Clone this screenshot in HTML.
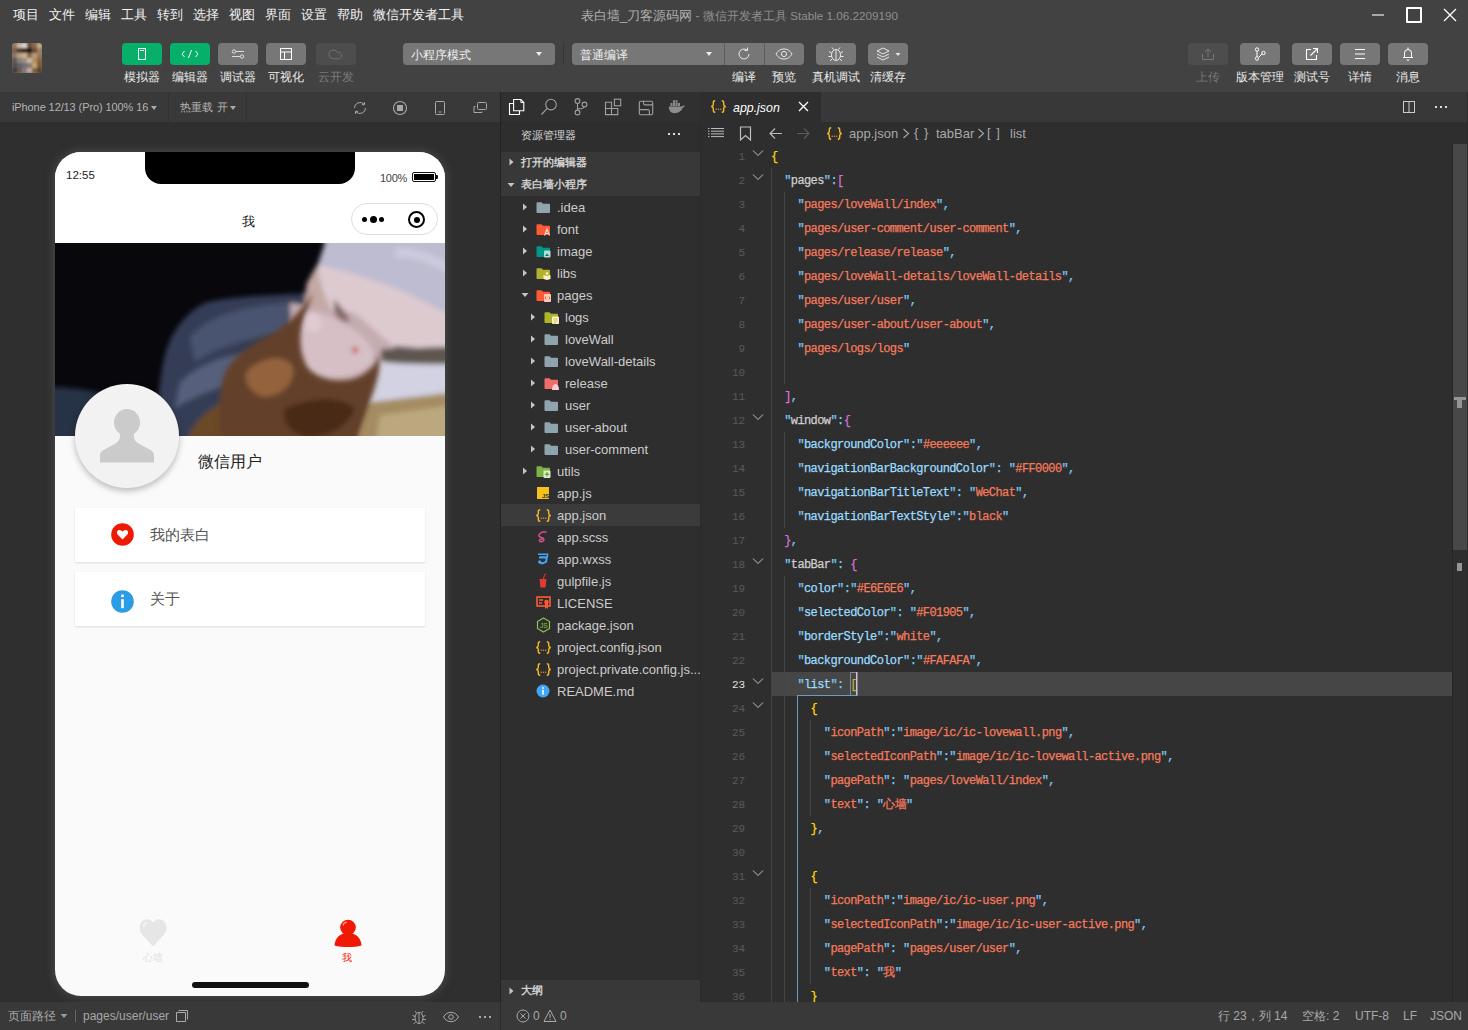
<!DOCTYPE html>
<html><head><meta charset="utf-8">
<style>
*{margin:0;padding:0;box-sizing:border-box}
html,body{width:1468px;height:1030px;overflow:hidden;background:#2e2e2e;font-family:"Liberation Sans",sans-serif;}
.a{position:absolute}
#top{left:0;top:0;width:1468px;height:92px;background:#424242}
#simbar{left:0;top:92px;width:500px;height:30px;background:#393939}
#sim{left:0;top:122px;width:500px;height:880px;background:#2f2f2f}
#vdiv{left:500px;top:92px;width:1px;height:910px;background:#222}
#exp{left:501px;top:92px;width:199px;height:910px;background:#2e2e2e}
#edtabs{left:701px;top:92px;width:767px;height:30px;background:#383838}
#editor{left:701px;top:122px;width:767px;height:880px;background:#2e2e2e}
#status{left:0;top:1002px;width:1468px;height:28px;background:#393939}
.menu{top:7px;font-size:13px;color:#f2f2f2;white-space:nowrap;line-height:16px}
.tb{top:43px;width:40px;height:22px;border-radius:4px;background:#777}
.tb svg{display:block}
.tb.g{background:#07b06a}
.tb.d{background:#4d4d4d}
.tl{top:69px;font-size:12px;color:#eaeaea;text-align:center;white-space:nowrap;line-height:16px}
.dd{top:43px;height:22px;border-radius:4px;background:#777;font-size:12px;color:#f0f0f0;padding-left:8px;line-height:24px;white-space:nowrap}
.car{position:absolute;left:133px;top:9px;width:0;height:0;border-left:3.5px solid transparent;border-right:3.5px solid transparent;border-top:4px solid #eee}
.car2{width:0;height:0;border-left:3.5px solid transparent;border-right:3.5px solid transparent;border-top:4px solid #aaa}
.card{width:350px;height:54px;background:#fff;box-shadow:0 1px 2px rgba(0,0,0,.12)}
.et{font-size:13px;color:#cccccc;white-space:nowrap;line-height:18px}
.sh{font-size:11px;font-weight:bold;color:#cfcfcf;white-space:nowrap;line-height:16px}
.ln{left:715px;width:30px;text-align:right;font-family:"Liberation Mono",monospace;font-size:11px;color:#5a5a5a;line-height:24px;letter-spacing:-0.1px}
.ln.cur{color:#e0e0e0}
.cl{left:771px;font-family:"Liberation Mono",monospace;font-size:12px;letter-spacing:-0.6px;line-height:24px;white-space:pre;color:#d4d4d4;-webkit-text-stroke:0.25px currentColor}
.q{color:#7ccaf8}
.k0{color:#d0d0d0}
.k1{color:#9cdcfe}
.s{color:#f47a5c}
.b1{color:#ffd700}
.b2{color:#da70d6}
.b3{color:#179fff}
.bx{outline:1px solid #888;outline-offset:-1px}
.ig{width:1px;background:#444}
.bc{font-size:13px;color:#a9a9a9;white-space:nowrap;line-height:16px}
.st{top:1008px;font-size:12px;color:#a8a8a8;white-space:nowrap;line-height:16px}
</style></head><body>
<!-- TOP -->
<div id="top" class="a"></div>
<div class="a menu" style="left:13px">项目</div>
<div class="a menu" style="left:49px">文件</div>
<div class="a menu" style="left:85px">编辑</div>
<div class="a menu" style="left:121px">工具</div>
<div class="a menu" style="left:157px">转到</div>
<div class="a menu" style="left:193px">选择</div>
<div class="a menu" style="left:229px">视图</div>
<div class="a menu" style="left:265px">界面</div>
<div class="a menu" style="left:301px">设置</div>
<div class="a menu" style="left:337px">帮助</div>
<div class="a menu" style="left:373px">微信开发者工具</div>
<div class="a" style="left:581px;top:7px;font-size:13px;color:#b0b0b0;white-space:nowrap">表白墙_刀客源码网<span style="color:#8e8e8e;font-size:12px"> - 微信开发者工具 <span style="font-size:11.7px">Stable 1.06.2209190</span></span></div>
<div class="a" style="left:1372px;top:14px;width:12px;height:2px;background:#a8a8a8"></div>
<div class="a" style="left:1406px;top:7px;width:16px;height:16px;border:2px solid #fff;border-radius:1px"></div>
<svg class="a" style="left:1443px;top:8px" width="14" height="14" viewBox="0 0 14 14"><path d="M1 1L13 13M13 1L1 13" stroke="#fff" stroke-width="1.3"/></svg>
<!-- avatar -->
<div class="a" style="left:12px;top:43px;width:30px;height:30px;border-radius:3px;overflow:hidden"><svg width="30" height="30" viewBox="0 0 30 30"><defs><filter id="avb" x="-20%" y="-20%" width="140%" height="140%"><feGaussianBlur stdDeviation="1.3"/></filter></defs><g filter="url(#avb)"><rect x="-3" y="-3" width="36" height="36" fill="#806a58"/><rect x="0" y="0" width="5" height="5" fill="#9a7860"/><rect x="5" y="0" width="5" height="5" fill="#c8b8a8"/><rect x="10" y="0" width="5" height="5" fill="#d8d0c8"/><rect x="15" y="0" width="5" height="5" fill="#6a5040"/><rect x="20" y="0" width="5" height="5" fill="#8a6850"/><rect x="25" y="0" width="5" height="5" fill="#c0a888"/><rect x="0" y="5" width="5" height="5" fill="#806048"/><rect x="5" y="5" width="5" height="5" fill="#504038"/><rect x="10" y="5" width="5" height="5" fill="#40302a"/><rect x="15" y="5" width="5" height="5" fill="#2a1e18"/><rect x="20" y="5" width="5" height="5" fill="#6a5040"/><rect x="25" y="5" width="5" height="5" fill="#a08060"/><rect x="0" y="10" width="5" height="5" fill="#8a7868"/><rect x="5" y="10" width="5" height="5" fill="#b8a080"/><rect x="10" y="10" width="5" height="5" fill="#c8b090"/><rect x="15" y="10" width="5" height="5" fill="#8a6a50"/><rect x="20" y="10" width="5" height="5" fill="#b89870"/><rect x="25" y="10" width="5" height="5" fill="#9a7858"/><rect x="0" y="15" width="5" height="5" fill="#605858"/><rect x="5" y="15" width="5" height="5" fill="#8a8078"/><rect x="10" y="15" width="5" height="5" fill="#a09080"/><rect x="15" y="15" width="5" height="5" fill="#c8b8a8"/><rect x="20" y="15" width="5" height="5" fill="#b09060"/><rect x="25" y="15" width="5" height="5" fill="#8a6040"/><rect x="0" y="20" width="5" height="5" fill="#505050"/><rect x="5" y="20" width="5" height="5" fill="#606068"/><rect x="10" y="20" width="5" height="5" fill="#707078"/><rect x="15" y="20" width="5" height="5" fill="#8a7a70"/><rect x="20" y="20" width="5" height="5" fill="#c0a070"/><rect x="25" y="20" width="5" height="5" fill="#7a5838"/><rect x="0" y="25" width="5" height="5" fill="#403a38"/><rect x="5" y="25" width="5" height="5" fill="#6a5a50"/><rect x="10" y="25" width="5" height="5" fill="#8a7a78"/><rect x="15" y="25" width="5" height="5" fill="#c0a8a0"/><rect x="20" y="25" width="5" height="5" fill="#806040"/><rect x="25" y="25" width="5" height="5" fill="#5a4028"/></g></svg></div>
<!-- toolbar buttons -->
<div class="a tb g" style="left:122px"><svg width="40" height="22"><rect x="16.5" y="5.5" width="7" height="11" fill="none" stroke="#fff" stroke-width="1"/><line x1="18" y1="7.5" x2="22" y2="7.5" stroke="#fff"/></svg></div>
<div class="a tb g" style="left:170px"><svg width="40" height="22"><path d="M14.5 8L12 11l2.5 3M25.5 8L28 11l-2.5 3M21.5 7L18.5 15" fill="none" stroke="#fff" stroke-width="1"/></svg></div>
<div class="a tb" style="left:218px"><svg width="40" height="22"><line x1="14" y1="8.5" x2="26" y2="8.5" stroke="#ddd"/><line x1="14" y1="13.5" x2="26" y2="13.5" stroke="#ddd"/><circle cx="16" cy="8.5" r="1.7" fill="#777" stroke="#ddd"/><circle cx="24" cy="13.5" r="1.7" fill="#777" stroke="#ddd"/></svg></div>
<div class="a tb" style="left:266px"><svg width="40" height="22"><rect x="14.5" y="5.5" width="11" height="11" fill="none" stroke="#fff"/><line x1="14.5" y1="9" x2="25.5" y2="9" stroke="#fff"/><line x1="18.5" y1="9" x2="18.5" y2="16.5" stroke="#fff"/></svg></div>
<div class="a tb d" style="left:316px"><svg width="40" height="22"><path d="M17.3 15.8a4.4 4.4 0 1 1 4-6.4 M21.3 9.4a3.2 3.2 0 1 1 1.8 6.4h-5.8" fill="none" stroke="#707070" stroke-width="1"/></svg></div>
<div class="a tl" style="left:114px;width:56px">模拟器</div>
<div class="a tl" style="left:162px;width:56px">编辑器</div>
<div class="a tl" style="left:210px;width:56px">调试器</div>
<div class="a tl" style="left:258px;width:56px">可视化</div>
<div class="a tl" style="left:308px;width:56px;color:#7a7a7a">云开发</div>
<!-- dropdowns -->
<div class="a dd" style="left:403px;width:152px">小程序模式<span class="car"></span></div>
<div class="a" style="left:563px;top:43px;width:1px;height:22px;background:#363636"></div>
<div class="a dd" style="left:572px;width:232px;padding-left:8px">普通编译<span class="car" style="left:134px"></span></div>
<div class="a" style="left:724px;top:43px;width:1px;height:22px;background:#5e5e5e"></div>
<div class="a" style="left:764px;top:43px;width:1px;height:22px;background:#5e5e5e"></div>
<svg class="a" style="left:734px;top:44px" width="20" height="20" viewBox="0 0 20 20"><path d="M15 10a5 5 0 1 1-2-4" fill="none" stroke="#e8e8e8" stroke-width="1"/><path d="M13.5 3.5v3h-3" fill="none" stroke="#e8e8e8" stroke-width="1"/></svg>
<svg class="a" style="left:774px;top:44px" width="20" height="20" viewBox="0 0 20 20"><path d="M2 10c2.5-4 5-5 8-5s5.5 1 8 5c-2.5 4-5 5-8 5s-5.5-1-8-5z" fill="none" stroke="#e8e8e8" stroke-width="1"/><circle cx="10" cy="10" r="2.6" fill="none" stroke="#e8e8e8" stroke-width="1"/></svg>
<div class="a tb" style="left:816px"><svg width="40" height="22"><ellipse cx="20" cy="12" rx="4.5" ry="5.5" fill="none" stroke="#e8e8e8"/><line x1="20" y1="7" x2="20" y2="17" stroke="#e8e8e8"/><path d="M17.5 6.5l-1.5-2M22.5 6.5l1.5-2M15.5 10l-2.5-1.5M24.5 10l2.5-1.5M15.5 13.5h-3M24.5 13.5h3M16 16l-2 2M24 16l2 2" stroke="#e8e8e8" fill="none"/></svg></div>
<div class="a tb" style="left:868px"><svg width="40" height="22"><path d="M9 8l6-3 6 3-6 3z M9 11l6 3 6-3 M9 14l6 3 6-3" fill="none" stroke="#e8e8e8"/><path d="M27.5 10h5l-2.5 3z" fill="#e8e8e8"/></svg></div>
<div class="a tl" style="left:716px;width:56px">编译</div>
<div class="a tl" style="left:756px;width:56px">预览</div>
<div class="a tl" style="left:806px;width:60px">真机调试</div>
<div class="a tl" style="left:860px;width:56px">清缓存</div>
<!-- right buttons -->
<div class="a tb d" style="left:1188px"><svg width="40" height="22"><path d="M14.5 11v5.5h11V11M20 14V6M17 9l3-3 3 3" fill="none" stroke="#777"/></svg></div>
<div class="a tb" style="left:1240px"><svg width="40" height="22"><circle cx="17" cy="6.5" r="1.7" fill="none" stroke="#fff"/><circle cx="17" cy="15.5" r="1.7" fill="none" stroke="#fff"/><circle cx="23.5" cy="10" r="1.7" fill="none" stroke="#fff"/><path d="M17 8.2v5.6M22 11l-3.5 3.5" stroke="#fff" fill="none"/></svg></div>
<div class="a tb" style="left:1292px"><svg width="40" height="22"><path d="M19 6.5h-4.5v10h10V12M18.5 12.5L25 6M21 5.5h4.5V10" fill="none" stroke="#fff" stroke-width="1.1"/></svg></div>
<div class="a tb" style="left:1340px"><svg width="40" height="22"><path d="M15 6.5h10M15 11h10M15 15.5h10" stroke="#fff"/></svg></div>
<div class="a tb" style="left:1388px"><svg width="40" height="22"><path d="M16.5 14.5v-4.5a3.5 3.5 0 0 1 7 0v4.5zM15 14.5h10M20 4.5v2M19 16.5a1 1 0 0 0 2 0" fill="none" stroke="#fff"/></svg></div>
<div class="a tl" style="left:1180px;width:56px;color:#777">上传</div>
<div class="a tl" style="left:1230px;width:60px">版本管理</div>
<div class="a tl" style="left:1284px;width:56px">测试号</div>
<div class="a tl" style="left:1332px;width:56px">详情</div>
<div class="a tl" style="left:1380px;width:56px">消息</div>
<!-- SIM -->
<div id="simbar" class="a"></div>
<div class="a" style="left:12px;top:101px;font-size:11px;color:#b4b4b4;white-space:nowrap;letter-spacing:-0.1px">iPhone 12/13 (Pro) 100% 16</div>
<div class="a car2" style="left:151px;top:106px"></div>
<div class="a" style="left:168px;top:92px;width:1px;height:30px;background:#333"></div>
<div class="a" style="left:180px;top:100px;font-size:11px;color:#b4b4b4;white-space:nowrap">热重载<span style="margin-left:4px">开</span></div>
<div class="a car2" style="left:230px;top:106px"></div>
<div class="a" style="left:246px;top:92px;width:1px;height:30px;background:#333"></div>
<svg class="a" style="left:352px;top:100px" width="16" height="16" viewBox="0 0 16 16"><path d="M2.5 8a5.5 5.5 0 0 1 9.5-3.8M13.5 8a5.5 5.5 0 0 1-9.5 3.8" fill="none" stroke="#a8a8a8" stroke-width="1"/><path d="M12.5 2v2.7H9.8M3.5 14v-2.7h2.7" fill="none" stroke="#a8a8a8"/></svg>
<svg class="a" style="left:392px;top:100px" width="16" height="16" viewBox="0 0 16 16"><circle cx="8" cy="8" r="6.5" fill="none" stroke="#a8a8a8" stroke-width="1.1"/><rect x="5" y="5" width="6" height="6" fill="#a8a8a8"/></svg>
<svg class="a" style="left:432px;top:100px" width="16" height="16" viewBox="0 0 16 16"><rect x="3.5" y="1.5" width="9" height="13" rx="1" fill="none" stroke="#a8a8a8"/><line x1="6.5" y1="12" x2="9.5" y2="12" stroke="#a8a8a8"/></svg>
<svg class="a" style="left:472px;top:100px" width="16" height="16" viewBox="0 0 16 16"><rect x="5.5" y="2.5" width="9" height="7" rx="1" fill="none" stroke="#a8a8a8"/><path d="M3.5 6.5h-1.5v6h8v-1" fill="none" stroke="#a8a8a8"/></svg>
<div id="sim" class="a"></div>
<!-- phone -->
<div class="a" id="phone" style="left:55px;top:152px;width:390px;height:844px;background:#fafafa;border-radius:26px;overflow:hidden;box-shadow:0 0 9px 2px rgba(90,90,90,.55)">
  <div class="a" style="left:0;top:0;width:390px;height:91px;background:#fff"></div>
  <div class="a" style="left:90px;top:0;width:210px;height:32px;background:#000;border-radius:0 0 16px 16px"></div>
  <div class="a" style="left:11px;top:17px;font-size:11.5px;color:#222">12:55</div>
  <div class="a" style="left:325px;top:20px;font-size:11px;color:#444;letter-spacing:-0.3px">100%</div>
  <div class="a" style="left:357px;top:20px;width:24px;height:10px;border:1.3px solid #111;border-radius:2px;padding:1px"><div style="width:100%;height:100%;background:#000"></div></div>
  <div class="a" style="left:381px;top:23px;width:2px;height:4px;background:#111;border-radius:0 1px 1px 0"></div>
  <div class="a" style="left:187px;top:61px;font-size:13px;color:#111">我</div>
  <div class="a" style="left:296px;top:51px;width:87px;height:32px;border:1px solid #dedede;border-radius:16px;background:#fff"></div>
  <div class="a" style="left:307px;top:65px;width:5px;height:5px;border-radius:50%;background:#000"></div>
  <div class="a" style="left:314.5px;top:64px;width:7px;height:7px;border-radius:50%;background:#000"></div>
  <div class="a" style="left:324px;top:65px;width:5px;height:5px;border-radius:50%;background:#000"></div>
  <div class="a" style="left:353px;top:59px;width:17px;height:17px;border-radius:50%;border:2.2px solid #000"></div>
  <div class="a" style="left:358.5px;top:64.5px;width:6px;height:6px;border-radius:50%;background:#000"></div>
  <!-- photo -->
  <svg class="a" style="left:0;top:91px" width="390" height="193" viewBox="0 0 390 193">
    <defs><filter id="bl" x="-10%" y="-10%" width="120%" height="120%"><feGaussianBlur stdDeviation="2.8"/></filter>
    <filter id="bl2" x="-10%" y="-10%" width="120%" height="120%"><feGaussianBlur stdDeviation="2.4"/></filter></defs>
    <rect x="-20" y="-20" width="430" height="233" fill="#07070c"/>
    <g filter="url(#bl)">
      <path d="M-20 144 Q40 142 90 165 Q105 180 112 213 L-20 213Z" fill="#283044"/>
      <path d="M100 213 C102 170 104 130 112 105 C118 88 130 70 150 60 C175 53 220 52 268 50 L270 213Z" fill="#363e56"/>
      <path d="M135 95 C150 75 185 62 240 60 L238 90 C205 92 170 100 140 118Z" fill="#4a5470"/>
      <path d="M125 140 C145 120 175 110 200 112 L195 140 C170 140 145 150 120 165Z" fill="#56607c"/>
      <path d="M256 -20 L410 -20 L410 80 C380 68 345 48 307 34 C290 28 275 24 262 24 L270 0Z" fill="#bdbcd0"/>
      <path d="M262 22 C285 26 300 30 345 47 C370 58 390 70 410 78 L410 104 C385 104 365 106 340 104 C320 98 300 85 283 75 C272 65 264 45 262 22Z" fill="#dccacf"/>
      <path d="M262 22 C266 45 272 62 283 76 L262 92 C250 80 248 60 252 40Z" fill="#c4a8a4"/>
      <path d="M235 60 L300 70 L340 105 L335 150 L240 150Z" fill="#c4acb0"/>
      <path d="M245 70 C260 66 285 75 300 88 C318 100 322 112 316 122 C300 135 275 138 258 130 C246 118 240 95 245 70Z" fill="#d6c0c6"/>
      <path d="M326 106 C350 106 380 104 410 104 L410 125 C380 128 350 125 326 118Z" fill="#5e5650"/>
      <path d="M318 118 C350 122 385 122 410 120 L410 152 L308 162Z" fill="#d2d2e2"/>
      <path d="M308 160 L410 148 L410 213 L292 213Z" fill="#a48c64"/>
      <path d="M128 213 C132 185 148 165 185 152 L220 213Z" fill="#6a4828"/>
    </g>
    <g filter="url(#bl2)">
      <path d="M279 56 C285 64 290 70 295 78 C290 80 284 76 280 70Z" fill="#806868"/>
      <path d="M258 50 C250 62 240 75 222 88 C200 100 180 110 170 130 C162 150 164 180 168 213 L298 213 C302 190 310 172 318 150 C322 138 326 125 324 112 C320 122 312 132 298 136 C280 140 262 136 252 124 C244 110 243 90 250 72 Z" fill="#64402a"/>
      <path d="M192 128 C208 114 228 110 238 124 C240 140 228 152 210 154 C196 150 188 140 192 128Z" fill="#94643e"/>
      <path d="M230 165 C255 155 285 152 300 165 C295 182 275 195 250 195 C232 188 226 175 230 165Z" fill="#4a2a18"/>
      <path d="M252 72 C262 68 268 74 266 84 C262 90 254 90 251 84Z" fill="#e0ccd0"/>
      <circle cx="300" cy="107" r="3" fill="#c86a62"/>
      <path d="M325 172 L410 160 L410 213 L318 213Z" fill="#bca87e"/>
      <path d="M340 10 C360 8 380 18 395 26" stroke="#d6d6e6" stroke-width="10" fill="none" opacity=".6"/>
    </g>
  </svg>
  <!-- avatar -->
  <div class="a" style="left:20px;top:232px;width:104px;height:104px;border-radius:50%;background:#f2f2f2;box-shadow:0 3px 6px rgba(0,0,0,.25)">
    <svg class="a" style="left:0;top:0" width="104" height="104" viewBox="0 0 104 104"><ellipse cx="52" cy="38.5" rx="13" ry="13.5" fill="#cbcbcb"/><path d="M45 49 C45.5 54 44.5 57 40.5 59.5 L28.5 66 C26 67.5 25 69 25 71.5 L25 78.5 L79 78.5 L79 71.5 C79 69 78 67.5 75.5 66 L63.5 59.5 C59.5 57 58.5 54 59 49Z" fill="#cbcbcb"/></svg>
  </div>
  <div class="a" style="left:143px;top:300px;font-size:16px;color:#222">微信用户</div>
  <!-- cards -->
  <div class="a card" style="left:20px;top:356px"></div>
  <div class="a card" style="left:20px;top:420px"></div>
  <svg class="a" style="left:56px;top:371px" width="23" height="23" viewBox="0 0 23 23"><circle cx="11.5" cy="11.5" r="11.3" fill="#ee1a00"/><path d="M11.5 16.5 L6.8 11.8 C5.3 10.3 5.6 7.6 7.8 7.1 C9.4 6.8 10.6 7.6 11.5 8.8 C12.4 7.6 13.6 6.8 15.2 7.1 C17.4 7.6 17.7 10.3 16.2 11.8Z" fill="#fff"/></svg>
  <div class="a" style="left:95px;top:374px;font-size:15px;color:#555">我的表白</div>
  <svg class="a" style="left:56px;top:438px" width="23" height="23" viewBox="0 0 23 23"><circle cx="11.5" cy="11.5" r="11.3" fill="#2a9de6"/><rect x="10.2" y="9.2" width="2.6" height="9" fill="#fff"/><circle cx="11.5" cy="5.8" r="1.5" fill="#fff"/></svg>
  <div class="a" style="left:95px;top:438px;font-size:15px;color:#555">关于</div>
  <!-- tabbar -->
  <svg class="a" style="left:84px;top:765px" width="28" height="30" viewBox="0 0 28 30"><path d="M14 29.5 L3 17.5 C-0.5 13.5 -0.3 5.5 5 3 C9 1.3 12.5 2.8 14 5.8 C15.5 2.8 19 1.3 23 3 C28.3 5.5 28.5 13.5 25 17.5Z" fill="#e6e6e6"/><path d="M4.8 10.5 C4.8 7.8 6.3 6 8.5 5.6" stroke="#f4f4f4" stroke-width="1.6" fill="none"/></svg>
  <div class="a" style="left:88px;top:799px;font-size:10px;color:#e0e0e0">心墙</div>
  <svg class="a" style="left:279px;top:767px" width="28" height="28" viewBox="0 0 28 28"><circle cx="14" cy="8.5" r="7.8" fill="#f01905"/><path d="M0.5 26.5 C1 18 7 14 14 14 C21 14 27 18 27.5 26.5 C20 28.5 8 28.5 0.5 26.5Z" fill="#f01905"/><path d="M9 6.5 C9.5 4.3 11 3.3 13 3.2" stroke="#ff9a8a" stroke-width="1.2" fill="none"/><path d="M7 17.5 C10 16.5 18 16.5 21 17.5" stroke="#fff" stroke-width="0.8" fill="none" opacity=".0"/></svg>
  <div class="a" style="left:287px;top:799px;font-size:10px;color:#f01905">我</div>
  <div class="a" style="left:137px;top:830px;width:117px;height:6px;border-radius:3px;background:#111"></div>
</div>
<div id="vdiv" class="a"></div><!-- EXPLORER -->
<div id="exp" class="a"></div>
<div class="a" style="left:501px;top:92px;width:199px;height:30px;background:#303030"></div>
<svg class="a" style="left:501px;top:92px" width="199" height="30" viewBox="501 92 199 30">
<path d="M513.5 103.5h-4v11h10v-3.8" fill="none" stroke="#fff" stroke-width="1.1"/>
<path d="M513.6 99.5h7.2l3 3v8.2h-10.2z" fill="none" stroke="#fff" stroke-width="1.1"/>
<path d="M520.8 99.5v3h3" fill="none" stroke="#fff" stroke-width=".9"/>
<circle cx="551" cy="104.6" r="5.3" fill="none" stroke="#a0a0a0" stroke-width="1.1"/>
<path d="M547.3 108.4L541.5 114.5" stroke="#a0a0a0" stroke-width="1.1"/>
<circle cx="577.5" cy="101" r="2.4" fill="none" stroke="#a0a0a0" stroke-width="1.1"/>
<circle cx="577.5" cy="112.5" r="2.4" fill="none" stroke="#a0a0a0" stroke-width="1.1"/>
<circle cx="584.5" cy="104.5" r="2.4" fill="none" stroke="#a0a0a0" stroke-width="1.1"/>
<path d="M577.5 103.4v6.7M584 106.8c-.5 1.5-1.5 1.9-3 1.9h-3.5" fill="none" stroke="#a0a0a0" stroke-width="1.1"/>
<path d="M605.5 102.3h6v12.3h-6zM605.5 108.5h12.3v6.1h-6.3" fill="none" stroke="#a0a0a0" stroke-width="1.1"/>
<rect x="614.4" y="99.2" width="6.3" height="6.6" fill="none" stroke="#a0a0a0" stroke-width="1.1"/>
<rect x="639.3" y="101.3" width="13.4" height="13.4" rx="1.5" fill="none" stroke="#a0a0a0" stroke-width="1.1"/>
<path d="M643.5 101.3v2c0 1 .5 1.6 1.5 1.6h7.7M639.3 109.6h8.5c1 0 1.6.6 1.6 1.6v3.5" fill="none" stroke="#a0a0a0" stroke-width="1.1"/>
<path d="M668.8 106.5h13.2c.6-.6 1.2-.9 2.8-.9-.4 1.4-1.2 2-2.2 2.4-1.2 3.2-4.4 5.2-8.2 5.2-3.4 0-5.6-2.5-5.6-6.7z" fill="#8c8c8c"/>
<path d="M670.5 103h2v3h-2zM673 103h2v3h-2zM675.5 103h2v3h-2zM673 100.3h2v2.4h-2zM675.5 100.3h2v2.4h-2zM678 103h2v3h-2z" fill="#8c8c8c"/>
</svg>
<div class="a" style="left:521px;top:127px;font-size:11px;color:#d8d8d8;line-height:16px">资源管理器</div>
<div class="a" style="left:668px;top:133px;width:2px;height:2px;background:#ddd;box-shadow:5px 0 #ddd,10px 0 #ddd"></div>
<div class="a" style="left:501px;top:152px;width:199px;height:44px;background:#383838"></div>
<svg class="a" style="left:508px;top:158px" width="8" height="8" viewBox="0 0 8 8"><path d="M1.5 0.5v7L5.5 4z" fill="#c5c5c5"/></svg>
<div class="a sh" style="left:521px;top:154px">打开的编辑器</div>
<svg class="a" style="left:507px;top:181px" width="8" height="8" viewBox="0 0 8 8"><path d="M0.5 2h7L4 6z" fill="#c5c5c5"/></svg>
<div class="a sh" style="left:521px;top:176px">表白墙小程序</div>
<svg class="a" style="left:522px;top:203px" width="8" height="8" viewBox="0 0 8 8"><path d="M1 0.5v7L5 4z" fill="#c5c5c5"/></svg>
<svg class="a" style="left:536px;top:202px" width="16" height="12" viewBox="0 0 16 12"><path d="M0.5 1.2 C0.5 0.6 0.8 0.3 1.4 0.3 L5.5 0.3 L7 1.8 L13 1.8 C13.6 1.8 14 2.2 14 2.8 L14 10 C14 10.6 13.6 11 13 11 L1.4 11 C0.8 11 0.5 10.6 0.5 10Z" fill="#90a4ae"/></svg>
<div class="a et" style="left:557px;top:199px">.idea</div>
<svg class="a" style="left:522px;top:225px" width="8" height="8" viewBox="0 0 8 8"><path d="M1 0.5v7L5 4z" fill="#c5c5c5"/></svg>
<svg class="a" style="left:536px;top:224px" width="16" height="12" viewBox="0 0 16 12"><path d="M0.5 1.2 C0.5 0.6 0.8 0.3 1.4 0.3 L5.5 0.3 L7 1.8 L13 1.8 C13.6 1.8 14 2.2 14 2.8 L14 10 C14 10.6 13.6 11 13 11 L1.4 11 C0.8 11 0.5 10.6 0.5 10Z" fill="#ff5a36"/><path d="M8.5 11.5 L11 5 L13.5 11.5 M9.5 9.5h3" stroke="#ffe0d8" stroke-width="1.1" fill="none"/></svg>
<div class="a et" style="left:557px;top:221px">font</div>
<svg class="a" style="left:522px;top:247px" width="8" height="8" viewBox="0 0 8 8"><path d="M1 0.5v7L5 4z" fill="#c5c5c5"/></svg>
<svg class="a" style="left:536px;top:246px" width="16" height="12" viewBox="0 0 16 12"><path d="M0.5 1.2 C0.5 0.6 0.8 0.3 1.4 0.3 L5.5 0.3 L7 1.8 L13 1.8 C13.6 1.8 14 2.2 14 2.8 L14 10 C14 10.6 13.6 11 13 11 L1.4 11 C0.8 11 0.5 10.6 0.5 10Z" fill="#009688"/><rect x="8" y="4.5" width="6.5" height="7" rx="1" fill="#b2dfdb"/><path d="M9 10 L11 7.5 L13 10z" fill="#00796b"/></svg>
<div class="a et" style="left:557px;top:243px">image</div>
<svg class="a" style="left:522px;top:269px" width="8" height="8" viewBox="0 0 8 8"><path d="M1 0.5v7L5 4z" fill="#c5c5c5"/></svg>
<svg class="a" style="left:536px;top:268px" width="16" height="12" viewBox="0 0 16 12"><path d="M0.5 1.2 C0.5 0.6 0.8 0.3 1.4 0.3 L5.5 0.3 L7 1.8 L13 1.8 C13.6 1.8 14 2.2 14 2.8 L14 10 C14 10.6 13.6 11 13 11 L1.4 11 C0.8 11 0.5 10.6 0.5 10Z" fill="#afb42b"/><path d="M7.5 7 L11 8 L14.5 7 V11 L11 12 L7.5 11Z" fill="#fff3c4"/><circle cx="11" cy="5.5" r="1.3" fill="#fff3c4"/></svg>
<div class="a et" style="left:557px;top:265px">libs</div>
<svg class="a" style="left:521px;top:291px" width="8" height="8" viewBox="0 0 8 8"><path d="M0.5 2h7L4 6z" fill="#c5c5c5"/></svg>
<svg class="a" style="left:536px;top:290px" width="16" height="12" viewBox="0 0 16 12"><path d="M0.5 1.2 C0.5 0.6 0.8 0.3 1.4 0.3 L5.5 0.3 L7 1.8 L13 1.8 C13.6 1.8 14 2.2 14 2.8 L14 10 C14 10.6 13.6 11 13 11 L1.4 11 C0.8 11 0.5 10.6 0.5 10Z" fill="#ff5a36"/><rect x="8" y="4" width="7" height="8" rx="1" fill="#ffccbc"/><path d="M10 6.5 L9 8 L10 9.5 M13 6.5 L14 8 L13 9.5" stroke="#e64a19" stroke-width=".8" fill="none"/></svg>
<div class="a et" style="left:557px;top:287px">pages</div>
<svg class="a" style="left:530px;top:313px" width="8" height="8" viewBox="0 0 8 8"><path d="M1 0.5v7L5 4z" fill="#c5c5c5"/></svg>
<svg class="a" style="left:544px;top:312px" width="16" height="12" viewBox="0 0 16 12"><path d="M0.5 1.2 C0.5 0.6 0.8 0.3 1.4 0.3 L5.5 0.3 L7 1.8 L13 1.8 C13.6 1.8 14 2.2 14 2.8 L14 10 C14 10.6 13.6 11 13 11 L1.4 11 C0.8 11 0.5 10.6 0.5 10Z" fill="#afb42b"/><rect x="8" y="4.5" width="7" height="7.5" rx="1" fill="#fff3c4"/><path d="M9.5 7h4M9.5 9h4M9.5 11h2.5" stroke="#c0a030" stroke-width=".7"/></svg>
<div class="a et" style="left:565px;top:309px">logs</div>
<svg class="a" style="left:530px;top:335px" width="8" height="8" viewBox="0 0 8 8"><path d="M1 0.5v7L5 4z" fill="#c5c5c5"/></svg>
<svg class="a" style="left:544px;top:334px" width="16" height="12" viewBox="0 0 16 12"><path d="M0.5 1.2 C0.5 0.6 0.8 0.3 1.4 0.3 L5.5 0.3 L7 1.8 L13 1.8 C13.6 1.8 14 2.2 14 2.8 L14 10 C14 10.6 13.6 11 13 11 L1.4 11 C0.8 11 0.5 10.6 0.5 10Z" fill="#90a4ae"/></svg>
<div class="a et" style="left:565px;top:331px">loveWall</div>
<svg class="a" style="left:530px;top:357px" width="8" height="8" viewBox="0 0 8 8"><path d="M1 0.5v7L5 4z" fill="#c5c5c5"/></svg>
<svg class="a" style="left:544px;top:356px" width="16" height="12" viewBox="0 0 16 12"><path d="M0.5 1.2 C0.5 0.6 0.8 0.3 1.4 0.3 L5.5 0.3 L7 1.8 L13 1.8 C13.6 1.8 14 2.2 14 2.8 L14 10 C14 10.6 13.6 11 13 11 L1.4 11 C0.8 11 0.5 10.6 0.5 10Z" fill="#90a4ae"/></svg>
<div class="a et" style="left:565px;top:353px">loveWall-details</div>
<svg class="a" style="left:530px;top:379px" width="8" height="8" viewBox="0 0 8 8"><path d="M1 0.5v7L5 4z" fill="#c5c5c5"/></svg>
<svg class="a" style="left:544px;top:378px" width="16" height="12" viewBox="0 0 16 12"><path d="M0.5 1.2 C0.5 0.6 0.8 0.3 1.4 0.3 L5.5 0.3 L7 1.8 L13 1.8 C13.6 1.8 14 2.2 14 2.8 L14 10 C14 10.6 13.6 11 13 11 L1.4 11 C0.8 11 0.5 10.6 0.5 10Z" fill="#ef6c6c"/><path d="M8 12 C8 8 9.5 6 11.5 6 C13.5 6 15 8 15 12Z" fill="#ffcdd2"/></svg>
<div class="a et" style="left:565px;top:375px">release</div>
<svg class="a" style="left:530px;top:401px" width="8" height="8" viewBox="0 0 8 8"><path d="M1 0.5v7L5 4z" fill="#c5c5c5"/></svg>
<svg class="a" style="left:544px;top:400px" width="16" height="12" viewBox="0 0 16 12"><path d="M0.5 1.2 C0.5 0.6 0.8 0.3 1.4 0.3 L5.5 0.3 L7 1.8 L13 1.8 C13.6 1.8 14 2.2 14 2.8 L14 10 C14 10.6 13.6 11 13 11 L1.4 11 C0.8 11 0.5 10.6 0.5 10Z" fill="#90a4ae"/></svg>
<div class="a et" style="left:565px;top:397px">user</div>
<svg class="a" style="left:530px;top:423px" width="8" height="8" viewBox="0 0 8 8"><path d="M1 0.5v7L5 4z" fill="#c5c5c5"/></svg>
<svg class="a" style="left:544px;top:422px" width="16" height="12" viewBox="0 0 16 12"><path d="M0.5 1.2 C0.5 0.6 0.8 0.3 1.4 0.3 L5.5 0.3 L7 1.8 L13 1.8 C13.6 1.8 14 2.2 14 2.8 L14 10 C14 10.6 13.6 11 13 11 L1.4 11 C0.8 11 0.5 10.6 0.5 10Z" fill="#90a4ae"/></svg>
<div class="a et" style="left:565px;top:419px">user-about</div>
<svg class="a" style="left:530px;top:445px" width="8" height="8" viewBox="0 0 8 8"><path d="M1 0.5v7L5 4z" fill="#c5c5c5"/></svg>
<svg class="a" style="left:544px;top:444px" width="16" height="12" viewBox="0 0 16 12"><path d="M0.5 1.2 C0.5 0.6 0.8 0.3 1.4 0.3 L5.5 0.3 L7 1.8 L13 1.8 C13.6 1.8 14 2.2 14 2.8 L14 10 C14 10.6 13.6 11 13 11 L1.4 11 C0.8 11 0.5 10.6 0.5 10Z" fill="#90a4ae"/></svg>
<div class="a et" style="left:565px;top:441px">user-comment</div>
<svg class="a" style="left:522px;top:467px" width="8" height="8" viewBox="0 0 8 8"><path d="M1 0.5v7L5 4z" fill="#c5c5c5"/></svg>
<svg class="a" style="left:536px;top:466px" width="16" height="12" viewBox="0 0 16 12"><path d="M0.5 1.2 C0.5 0.6 0.8 0.3 1.4 0.3 L5.5 0.3 L7 1.8 L13 1.8 C13.6 1.8 14 2.2 14 2.8 L14 10 C14 10.6 13.6 11 13 11 L1.4 11 C0.8 11 0.5 10.6 0.5 10Z" fill="#7cb342"/><rect x="7.5" y="4.5" width="7" height="7.5" rx="1" fill="#dcedc8"/><path d="M11 6 V10.5 M8.8 8.2 H13.2" stroke="#558b2f" stroke-width="1"/></svg>
<div class="a et" style="left:557px;top:463px">utils</div>
<svg class="a" style="left:536px;top:486px" width="14" height="14" viewBox="0 0 14 14"><rect x="1" y="1" width="12" height="12" fill="#f5c21b"/><text x="6" y="11.5" font-size="6" font-family="Liberation Sans" font-weight="bold" fill="#333">JS</text></svg>
<div class="a et" style="left:557px;top:485px">app.js</div>
<div class="a" style="left:501px;top:504px;width:199px;height:22px;background:#3b3b3b"></div>
<svg class="a" style="left:535px;top:509px" width="17" height="13" viewBox="0 0 17 13"><path d="M5.2 0.7C3.6 0.7 3.3 1.4 3.3 2.8V4.6C3.3 5.6 2.8 6.3 1.3 6.5C2.8 6.7 3.3 7.4 3.3 8.4V10.2C3.3 11.6 3.6 12.3 5.2 12.3" fill="none" stroke="#f5b72b" stroke-width="1.4"/><path d="M11.8 0.7C13.4 0.7 13.7 1.4 13.7 2.8V4.6C13.7 5.6 14.2 6.3 15.7 6.5C14.2 6.7 13.7 7.4 13.7 8.4V10.2C13.7 11.6 13.4 12.3 11.8 12.3" fill="none" stroke="#f5b72b" stroke-width="1.4"/><circle cx="6.2" cy="9.2" r=".75" fill="#d89a28"/><circle cx="8.5" cy="9.2" r=".75" fill="#d89a28"/><circle cx="10.8" cy="9.2" r=".75" fill="#d89a28"/></svg>
<div class="a et" style="left:557px;top:507px">app.json</div>
<svg class="a" style="left:536px;top:530px" width="14" height="14" viewBox="0 0 14 14"><path d="M10.5 2.5 C8 0.5 2.5 3 3 6 C3.5 8 8 7 8 9.5 C8 11.5 4.5 12.5 3.5 11 C2.8 10 5 8.5 7 9" stroke="#d0508f" stroke-width="1.5" fill="none"/></svg>
<div class="a et" style="left:557px;top:529px">app.scss</div>
<svg class="a" style="left:536px;top:552px" width="14" height="14" viewBox="0 0 14 14"><path d="M2 1.5h10.5l-1.5 9-5 2-4-1.5.5-2.5h2.5l-.3 1 1.8.7 2.7-1 .5-2.7H2.8l.5-2.2h7.2l.3-1.3H2z" fill="#42a5f5"/></svg>
<div class="a et" style="left:557px;top:551px">app.wxss</div>
<svg class="a" style="left:536px;top:573px" width="14" height="16" viewBox="0 0 14 16"><path d="M3.5 6 L10.5 6 L9.5 14.5 L4.5 14.5Z" fill="#e53935"/><path d="M7.5 6 L8.5 1.5 L10 1" stroke="#e53935" stroke-width="1" fill="none"/></svg>
<div class="a et" style="left:557px;top:573px">gulpfile.js</div>
<svg class="a" style="left:536px;top:595px" width="15" height="16" viewBox="0 0 15 16"><rect x="1" y="2" width="13" height="9" fill="none" stroke="#ff5a36" stroke-width="1.6"/><path d="M3 5h4M3 8h3" stroke="#ff5a36" stroke-width="1.3"/><circle cx="10.5" cy="7" r="2.3" fill="#ff5a36"/><path d="M9 9 L9 14 L10.5 12.5 L12 14 L12 9" fill="#ff5a36"/></svg>
<div class="a et" style="left:557px;top:595px">LICENSE</div>
<svg class="a" style="left:536px;top:617px" width="15" height="16" viewBox="0 0 15 16"><path d="M7.5 1 L13.5 4.5 L13.5 11.5 L7.5 15 L1.5 11.5 L1.5 4.5Z" fill="none" stroke="#8bc34a" stroke-width="1.2"/><text x="4" y="11" font-size="6.5" font-family="Liberation Sans" fill="#8bc34a">JS</text></svg>
<div class="a et" style="left:557px;top:617px">package.json</div>
<svg class="a" style="left:535px;top:641px" width="17" height="13" viewBox="0 0 17 13"><path d="M5.2 0.7C3.6 0.7 3.3 1.4 3.3 2.8V4.6C3.3 5.6 2.8 6.3 1.3 6.5C2.8 6.7 3.3 7.4 3.3 8.4V10.2C3.3 11.6 3.6 12.3 5.2 12.3" fill="none" stroke="#f5b72b" stroke-width="1.4"/><path d="M11.8 0.7C13.4 0.7 13.7 1.4 13.7 2.8V4.6C13.7 5.6 14.2 6.3 15.7 6.5C14.2 6.7 13.7 7.4 13.7 8.4V10.2C13.7 11.6 13.4 12.3 11.8 12.3" fill="none" stroke="#f5b72b" stroke-width="1.4"/><circle cx="6.2" cy="9.2" r=".75" fill="#d89a28"/><circle cx="8.5" cy="9.2" r=".75" fill="#d89a28"/><circle cx="10.8" cy="9.2" r=".75" fill="#d89a28"/></svg>
<div class="a et" style="left:557px;top:639px">project.config.json</div>
<svg class="a" style="left:535px;top:663px" width="17" height="13" viewBox="0 0 17 13"><path d="M5.2 0.7C3.6 0.7 3.3 1.4 3.3 2.8V4.6C3.3 5.6 2.8 6.3 1.3 6.5C2.8 6.7 3.3 7.4 3.3 8.4V10.2C3.3 11.6 3.6 12.3 5.2 12.3" fill="none" stroke="#f5b72b" stroke-width="1.4"/><path d="M11.8 0.7C13.4 0.7 13.7 1.4 13.7 2.8V4.6C13.7 5.6 14.2 6.3 15.7 6.5C14.2 6.7 13.7 7.4 13.7 8.4V10.2C13.7 11.6 13.4 12.3 11.8 12.3" fill="none" stroke="#f5b72b" stroke-width="1.4"/><circle cx="6.2" cy="9.2" r=".75" fill="#d89a28"/><circle cx="8.5" cy="9.2" r=".75" fill="#d89a28"/><circle cx="10.8" cy="9.2" r=".75" fill="#d89a28"/></svg>
<div class="a et" style="left:557px;top:661px">project.private.config.js...</div>
<svg class="a" style="left:536px;top:684px" width="14" height="14" viewBox="0 0 14 14"><circle cx="7" cy="7" r="6.5" fill="#42a5f5"/><rect x="6.2" y="5.8" width="1.6" height="4.8" fill="#fff"/><circle cx="7" cy="3.9" r=".9" fill="#fff"/></svg>
<div class="a et" style="left:557px;top:683px">README.md</div>
<div class="a" style="left:501px;top:980px;width:199px;height:22px;background:#383838"></div>
<svg class="a" style="left:508px;top:987px" width="8" height="8" viewBox="0 0 8 8"><path d="M1.5 0.5v7L5.5 4z" fill="#c5c5c5"/></svg>
<div class="a sh" style="left:521px;top:982px">大纲</div>
<div class="a" style="left:700px;top:122px;width:1px;height:880px;background:#2a2a2a"></div>
<!-- EDITOR -->
<div id="edtabs" class="a"></div>
<div class="a" style="left:701px;top:92px;width:120px;height:30px;background:#2e2e2e"></div>
<svg class="a" style="left:710px;top:100px" width="17" height="13" viewBox="0 0 17 13"><path d="M5.2 0.7C3.6 0.7 3.3 1.4 3.3 2.8V4.6C3.3 5.6 2.8 6.3 1.3 6.5C2.8 6.7 3.3 7.4 3.3 8.4V10.2C3.3 11.6 3.6 12.3 5.2 12.3" fill="none" stroke="#f5b72b" stroke-width="1.4"/><path d="M11.8 0.7C13.4 0.7 13.7 1.4 13.7 2.8V4.6C13.7 5.6 14.2 6.3 15.7 6.5C14.2 6.7 13.7 7.4 13.7 8.4V10.2C13.7 11.6 13.4 12.3 11.8 12.3" fill="none" stroke="#f5b72b" stroke-width="1.4"/><circle cx="6.2" cy="9.2" r=".75" fill="#d89a28"/><circle cx="8.5" cy="9.2" r=".75" fill="#d89a28"/><circle cx="10.8" cy="9.2" r=".75" fill="#d89a28"/></svg>
<div class="a" style="left:733px;top:100px;font-size:12.4px;font-style:italic;color:#fff;line-height:16px">app.json</div>
<svg class="a" style="left:798px;top:101px" width="11" height="11" viewBox="0 0 11 11"><path d="M1 1L10 10M10 1L1 10" stroke="#fff" stroke-width="1.3"/></svg>
<svg class="a" style="left:1402px;top:100px" width="14" height="14" viewBox="0 0 14 14"><rect x="1.5" y="1.5" width="11" height="11" fill="none" stroke="#ccc"/><line x1="7" y1="1.5" x2="7" y2="12.5" stroke="#ccc"/></svg>
<div class="a" style="left:1435px;top:106px;width:2px;height:2px;background:#ddd;box-shadow:5px 0 #ddd,10px 0 #ddd"></div>
<div id="editor" class="a"></div>
<!-- breadcrumbs -->
<svg class="a" style="left:708px;top:127px" width="17" height="12" viewBox="0 0 17 12"><path d="M0 1.5h1.5M0 4.2h1.5M0 6.9h1.5M0 9.6h1.5M3 1.5h13M3 4.2h13M3 6.9h13M3 9.6h13" stroke="#bdbdbd" stroke-width="1"/></svg>
<svg class="a" style="left:739px;top:126px" width="13" height="15" viewBox="0 0 13 15"><path d="M1.5 1h10v13L6.5 9.5 1.5 14z" fill="none" stroke="#bdbdbd" stroke-width="1.2"/></svg>
<svg class="a" style="left:768px;top:127px" width="15" height="13" viewBox="0 0 15 13"><path d="M14 6.5H2M7 1.5L2 6.5 7 11.5" fill="none" stroke="#bdbdbd" stroke-width="1.1"/></svg>
<svg class="a" style="left:796px;top:127px" width="15" height="13" viewBox="0 0 15 13"><path d="M1 6.5h12M8 1.5l5 5-5 5" fill="none" stroke="#5c5c5c" stroke-width="1.1"/></svg>
<svg class="a" style="left:826px;top:127px" width="17" height="13" viewBox="0 0 17 13"><path d="M5.2 0.7C3.6 0.7 3.3 1.4 3.3 2.8V4.6C3.3 5.6 2.8 6.3 1.3 6.5C2.8 6.7 3.3 7.4 3.3 8.4V10.2C3.3 11.6 3.6 12.3 5.2 12.3" fill="none" stroke="#f5b72b" stroke-width="1.4"/><path d="M11.8 0.7C13.4 0.7 13.7 1.4 13.7 2.8V4.6C13.7 5.6 14.2 6.3 15.7 6.5C14.2 6.7 13.7 7.4 13.7 8.4V10.2C13.7 11.6 13.4 12.3 11.8 12.3" fill="none" stroke="#f5b72b" stroke-width="1.4"/><circle cx="6.2" cy="9.2" r=".75" fill="#d89a28"/><circle cx="8.5" cy="9.2" r=".75" fill="#d89a28"/><circle cx="10.8" cy="9.2" r=".75" fill="#d89a28"/></svg>
<div class="a bc" style="left:849px;top:126px">app.json</div>
<svg class="a" style="left:902px;top:128px" width="8" height="11" viewBox="0 0 8 11"><path d="M1.5 1l5 4.5-5 4.5" fill="none" stroke="#a9a9a9" stroke-width="1.1"/></svg>
<div class="a bc" style="left:914px;top:125px;letter-spacing:1px">{ }</div>
<div class="a bc" style="left:936px;top:126px">tabBar</div>
<svg class="a" style="left:977px;top:128px" width="8" height="11" viewBox="0 0 8 11"><path d="M1.5 1l5 4.5-5 4.5" fill="none" stroke="#a9a9a9" stroke-width="1.1"/></svg>
<div class="a bc" style="left:987px;top:125px;letter-spacing:1px">[ ]</div>
<div class="a bc" style="left:1010px;top:126px">list</div>
<!-- current line -->
<div class="a" style="left:771px;top:672px;width:681px;height:24px;background:#464646"></div>
<div class="a" style="left:850px;top:672px;width:8px;height:24px;border:1px solid #858585"></div>
<div class="a" style="left:856px;top:672px;width:1px;height:24px;background:#d0c0d8"></div>
<div class="a" style="left:797px;top:695px;width:60px;height:1px;background:#6a9bc0"></div>
<!-- indent guides -->
<div class="a ig" style="left:771px;top:168px;height:840px"></div>
<div class="a ig" style="left:784px;top:192px;height:192px"></div>
<div class="a ig" style="left:784px;top:432px;height:96px"></div>
<div class="a ig" style="left:784px;top:576px;height:426px"></div>
<div class="a ig" style="left:797px;top:696px;height:306px;background:#6a9bc0"></div>
<div class="a ig" style="left:810px;top:720px;height:96px"></div>
<div class="a ig" style="left:810px;top:888px;height:96px"></div>
<div class="a ln" style="top:145px">1</div>
<svg class="a" style="left:752px;top:149px" width="12" height="8" viewBox="0 0 12 8"><path d="M1 1.5 L6 6.5 L11 1.5" stroke="#c0c0c0" stroke-width="1" fill="none"/></svg>
<div class="a cl" style="top:145px"><span class="b1">{</span></div>
<div class="a ln" style="top:169px">2</div>
<svg class="a" style="left:752px;top:173px" width="12" height="8" viewBox="0 0 12 8"><path d="M1 1.5 L6 6.5 L11 1.5" stroke="#c0c0c0" stroke-width="1" fill="none"/></svg>
<div class="a cl" style="top:169px">  <span class="q">&quot;</span><span class="k0">pages</span><span class="q">&quot;</span><span class="q">:</span><span class="b2">[</span></div>
<div class="a ln" style="top:193px">3</div>
<div class="a cl" style="top:193px">    <span class="q">&quot;</span><span class="s">pages/loveWall/index</span><span class="q">&quot;</span><span class="q">,</span></div>
<div class="a ln" style="top:217px">4</div>
<div class="a cl" style="top:217px">    <span class="q">&quot;</span><span class="s">pages/user-comment/user-comment</span><span class="q">&quot;</span><span class="q">,</span></div>
<div class="a ln" style="top:241px">5</div>
<div class="a cl" style="top:241px">    <span class="q">&quot;</span><span class="s">pages/release/release</span><span class="q">&quot;</span><span class="q">,</span></div>
<div class="a ln" style="top:265px">6</div>
<div class="a cl" style="top:265px">    <span class="q">&quot;</span><span class="s">pages/loveWall-details/loveWall-details</span><span class="q">&quot;</span><span class="q">,</span></div>
<div class="a ln" style="top:289px">7</div>
<div class="a cl" style="top:289px">    <span class="q">&quot;</span><span class="s">pages/user/user</span><span class="q">&quot;</span><span class="q">,</span></div>
<div class="a ln" style="top:313px">8</div>
<div class="a cl" style="top:313px">    <span class="q">&quot;</span><span class="s">pages/user-about/user-about</span><span class="q">&quot;</span><span class="q">,</span></div>
<div class="a ln" style="top:337px">9</div>
<div class="a cl" style="top:337px">    <span class="q">&quot;</span><span class="s">pages/logs/logs</span><span class="q">&quot;</span></div>
<div class="a ln" style="top:361px">10</div>
<div class="a cl" style="top:361px"></div>
<div class="a ln" style="top:385px">11</div>
<div class="a cl" style="top:385px">  <span class="b2">]</span><span class="q">,</span></div>
<div class="a ln" style="top:409px">12</div>
<svg class="a" style="left:752px;top:413px" width="12" height="8" viewBox="0 0 12 8"><path d="M1 1.5 L6 6.5 L11 1.5" stroke="#c0c0c0" stroke-width="1" fill="none"/></svg>
<div class="a cl" style="top:409px">  <span class="q">&quot;</span><span class="k0">window</span><span class="q">&quot;</span><span class="q">:</span><span class="b2">{</span></div>
<div class="a ln" style="top:433px">13</div>
<div class="a cl" style="top:433px">    <span class="q">&quot;</span><span class="k1">backgroundColor</span><span class="q">&quot;</span><span class="q">:</span><span class="q">&quot;</span><span class="s">#eeeeee</span><span class="q">&quot;</span><span class="q">,</span></div>
<div class="a ln" style="top:457px">14</div>
<div class="a cl" style="top:457px">    <span class="q">&quot;</span><span class="k1">navigationBarBackgroundColor</span><span class="q">&quot;</span><span class="q">: </span><span class="q">&quot;</span><span class="s">#FF0000</span><span class="q">&quot;</span><span class="q">,</span></div>
<div class="a ln" style="top:481px">15</div>
<div class="a cl" style="top:481px">    <span class="q">&quot;</span><span class="k1">navigationBarTitleText</span><span class="q">&quot;</span><span class="q">: </span><span class="q">&quot;</span><span class="s">WeChat</span><span class="q">&quot;</span><span class="q">,</span></div>
<div class="a ln" style="top:505px">16</div>
<div class="a cl" style="top:505px">    <span class="q">&quot;</span><span class="k1">navigationBarTextStyle</span><span class="q">&quot;</span><span class="q">:</span><span class="q">&quot;</span><span class="s">black</span><span class="q">&quot;</span></div>
<div class="a ln" style="top:529px">17</div>
<div class="a cl" style="top:529px">  <span class="b2">}</span><span class="q">,</span></div>
<div class="a ln" style="top:553px">18</div>
<svg class="a" style="left:752px;top:557px" width="12" height="8" viewBox="0 0 12 8"><path d="M1 1.5 L6 6.5 L11 1.5" stroke="#c0c0c0" stroke-width="1" fill="none"/></svg>
<div class="a cl" style="top:553px">  <span class="q">&quot;</span><span class="k0">tabBar</span><span class="q">&quot;</span><span class="q">: </span><span class="b2">{</span></div>
<div class="a ln" style="top:577px">19</div>
<div class="a cl" style="top:577px">    <span class="q">&quot;</span><span class="k1">color</span><span class="q">&quot;</span><span class="q">:</span><span class="q">&quot;</span><span class="s">#E6E6E6</span><span class="q">&quot;</span><span class="q">,</span></div>
<div class="a ln" style="top:601px">20</div>
<div class="a cl" style="top:601px">    <span class="q">&quot;</span><span class="k1">selectedColor</span><span class="q">&quot;</span><span class="q">: </span><span class="q">&quot;</span><span class="s">#F01905</span><span class="q">&quot;</span><span class="q">,</span></div>
<div class="a ln" style="top:625px">21</div>
<div class="a cl" style="top:625px">    <span class="q">&quot;</span><span class="k1">borderStyle</span><span class="q">&quot;</span><span class="q">:</span><span class="q">&quot;</span><span class="s">white</span><span class="q">&quot;</span><span class="q">,</span></div>
<div class="a ln" style="top:649px">22</div>
<div class="a cl" style="top:649px">    <span class="q">&quot;</span><span class="k1">backgroundColor</span><span class="q">&quot;</span><span class="q">:</span><span class="q">&quot;</span><span class="s">#FAFAFA</span><span class="q">&quot;</span><span class="q">,</span></div>
<div class="a ln cur" style="top:673px">23</div>
<svg class="a" style="left:752px;top:677px" width="12" height="8" viewBox="0 0 12 8"><path d="M1 1.5 L6 6.5 L11 1.5" stroke="#c0c0c0" stroke-width="1" fill="none"/></svg>
<div class="a cl" style="top:673px">    <span class="q">&quot;</span><span class="k1">list</span><span class="q">&quot;</span><span class="q">: </span><span class="b1" style="color:#b8b040">[</span></div>
<div class="a ln" style="top:697px">24</div>
<svg class="a" style="left:752px;top:701px" width="12" height="8" viewBox="0 0 12 8"><path d="M1 1.5 L6 6.5 L11 1.5" stroke="#c0c0c0" stroke-width="1" fill="none"/></svg>
<div class="a cl" style="top:697px">      <span class="b1">{</span></div>
<div class="a ln" style="top:721px">25</div>
<div class="a cl" style="top:721px">        <span class="q">&quot;</span><span class="s">iconPath</span><span class="q">&quot;</span><span class="q">:</span><span class="q">&quot;</span><span class="s">image/ic/ic-lovewall.png</span><span class="q">&quot;</span><span class="q">,</span></div>
<div class="a ln" style="top:745px">26</div>
<div class="a cl" style="top:745px">        <span class="q">&quot;</span><span class="s">selectedIconPath</span><span class="q">&quot;</span><span class="q">:</span><span class="q">&quot;</span><span class="s">image/ic/ic-lovewall-active.png</span><span class="q">&quot;</span><span class="q">,</span></div>
<div class="a ln" style="top:769px">27</div>
<div class="a cl" style="top:769px">        <span class="q">&quot;</span><span class="s">pagePath</span><span class="q">&quot;</span><span class="q">: </span><span class="q">&quot;</span><span class="s">pages/loveWall/index</span><span class="q">&quot;</span><span class="q">,</span></div>
<div class="a ln" style="top:793px">28</div>
<div class="a cl" style="top:793px">        <span class="q">&quot;</span><span class="s">text</span><span class="q">&quot;</span><span class="q">: </span><span class="q">&quot;</span><span class="s">心墙</span><span class="q">&quot;</span></div>
<div class="a ln" style="top:817px">29</div>
<div class="a cl" style="top:817px">      <span class="b1">}</span><span class="q">,</span></div>
<div class="a ln" style="top:841px">30</div>
<div class="a cl" style="top:841px"></div>
<div class="a ln" style="top:865px">31</div>
<svg class="a" style="left:752px;top:869px" width="12" height="8" viewBox="0 0 12 8"><path d="M1 1.5 L6 6.5 L11 1.5" stroke="#c0c0c0" stroke-width="1" fill="none"/></svg>
<div class="a cl" style="top:865px">      <span class="b1">{</span></div>
<div class="a ln" style="top:889px">32</div>
<div class="a cl" style="top:889px">        <span class="q">&quot;</span><span class="s">iconPath</span><span class="q">&quot;</span><span class="q">:</span><span class="q">&quot;</span><span class="s">image/ic/ic-user.png</span><span class="q">&quot;</span><span class="q">,</span></div>
<div class="a ln" style="top:913px">33</div>
<div class="a cl" style="top:913px">        <span class="q">&quot;</span><span class="s">selectedIconPath</span><span class="q">&quot;</span><span class="q">:</span><span class="q">&quot;</span><span class="s">image/ic/ic-user-active.png</span><span class="q">&quot;</span><span class="q">,</span></div>
<div class="a ln" style="top:937px">34</div>
<div class="a cl" style="top:937px">        <span class="q">&quot;</span><span class="s">pagePath</span><span class="q">&quot;</span><span class="q">: </span><span class="q">&quot;</span><span class="s">pages/user/user</span><span class="q">&quot;</span><span class="q">,</span></div>
<div class="a ln" style="top:961px">35</div>
<div class="a cl" style="top:961px">        <span class="q">&quot;</span><span class="s">text</span><span class="q">&quot;</span><span class="q">: </span><span class="q">&quot;</span><span class="s">我</span><span class="q">&quot;</span></div>
<div class="a ln" style="top:985px">36</div>
<div class="a cl" style="top:985px">      <span class="b1">}</span></div>
<!-- scrollbar -->
<div class="a" style="left:1452px;top:144px;width:1px;height:858px;background:#252525"></div>
<div class="a" style="left:1453px;top:144px;width:14px;height:406px;background:#484848"></div>
<div class="a" style="left:1454px;top:397px;width:12px;height:3px;background:#959595"></div>
<div class="a" style="left:1457px;top:399px;width:5px;height:9px;background:#959595"></div>
<div class="a" style="left:1457px;top:563px;width:5px;height:8px;background:#959595"></div>
<div class="a" style="left:1467px;top:92px;width:1px;height:910px;background:#2c2c2c"></div>
<!-- STATUS -->
<div id="status" class="a"></div>
<div class="a st" style="left:8px">页面路径</div>
<svg class="a" style="left:60px;top:1013px" width="8" height="6" viewBox="0 0 8 6"><path d="M0.5 1h7L4 5z" fill="#9a9a9a"/></svg>
<div class="a" style="left:75px;top:1010px;width:1px;height:12px;background:#666"></div>
<div class="a st" style="left:83px">pages/user/user</div>
<svg class="a" style="left:175px;top:1009px" width="14" height="14" viewBox="0 0 14 14"><path d="M3.5 1.5h9v9M1.5 3.5h9v9h-9z" fill="none" stroke="#aaa" stroke-width="1"/></svg>
<svg class="a" style="left:410px;top:1009px" width="18" height="16" viewBox="0 0 18 16"><ellipse cx="9" cy="9" rx="4" ry="5.5" fill="none" stroke="#aaa"/><path d="M9 3.5v11M6.5 4L5 2M11.5 4L13 2M5 7.5L2.5 6.5M13 7.5l2.5-1M5 10.5H2M13 10.5h3M5.5 13l-2 2M12.5 13l2 2" fill="none" stroke="#aaa" stroke-width=".9"/></svg>
<svg class="a" style="left:442px;top:1010px" width="18" height="14" viewBox="0 0 18 14"><path d="M1.5 7c2-3.3 4.5-4.7 7.5-4.7s5.5 1.4 7.5 4.7c-2 3.3-4.5 4.7-7.5 4.7S3.5 10.3 1.5 7z" fill="none" stroke="#aaa"/><circle cx="9" cy="7" r="2.3" fill="none" stroke="#aaa"/></svg>
<div class="a" style="left:479px;top:1016px;width:2px;height:2px;background:#aaa;box-shadow:5px 0 #aaa,10px 0 #aaa"></div>
<div class="a" style="left:500px;top:1002px;width:1px;height:28px;background:#2a2a2a"></div>
<svg class="a" style="left:516px;top:1009px" width="14" height="14" viewBox="0 0 14 14"><circle cx="7" cy="7" r="6" fill="none" stroke="#aaa"/><path d="M4.5 4.5l5 5M9.5 4.5l-5 5" stroke="#aaa"/></svg>
<div class="a st" style="left:533px">0</div>
<svg class="a" style="left:543px;top:1009px" width="14" height="14" viewBox="0 0 14 14"><path d="M7 1L13 12.5H1z" fill="none" stroke="#aaa"/><path d="M7 5v4M7 10v1.2" stroke="#aaa"/></svg>
<div class="a st" style="left:560px">0</div>
<div class="a st" style="left:1218px">行 23，列 14</div>
<div class="a st" style="left:1302px">空格: 2</div>
<div class="a st" style="left:1355px">UTF-8</div>
<div class="a st" style="left:1403px">LF</div>
<div class="a st" style="left:1430px">JSON</div>
</body></html>
